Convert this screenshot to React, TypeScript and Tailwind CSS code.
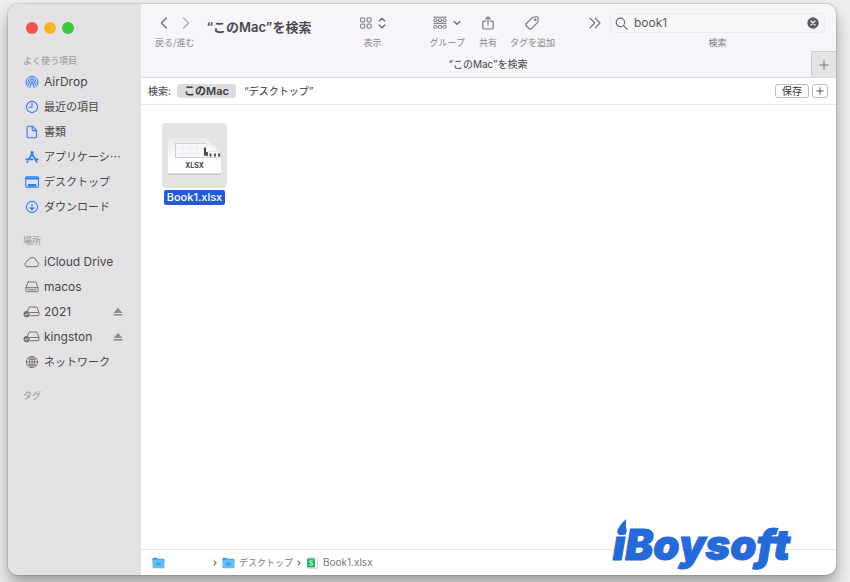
import { useState, type ReactNode } from "react";

const latin = "font-['Inter','Noto_Sans_CJK_JP',sans-serif]";
const jp = "font-['Noto_Sans_CJK_JP',sans-serif]";

const iconProps = {
  width: 18,
  height: 16,
  viewBox: "0 0 18 16",
  fill: "none",
  stroke: "currentColor",
  strokeLinecap: "round",
  strokeLinejoin: "round",
  "aria-hidden": true,
  className: "shrink-0",
} as const;

const strokeProps = {
  fill: "none",
  stroke: "currentColor",
  strokeLinecap: "round",
  strokeLinejoin: "round",
  "aria-hidden": true,
} as const;

function AirDropIcon() {
  return (
    <svg {...iconProps} strokeWidth="1">
      <path d="M5 12.8A6 6 0 1 1 13 12.8" />
      <path d="M5.9 11.2A4.2 4.2 0 1 1 12.1 11.2" />
      <path d="M7 9.8A2.5 2.5 0 1 1 11 9.8" />
      <path d="M8.4 9.4 6.8 13.6M9.6 9.4l1.6 4.2" />
      <circle cx="9" cy="8.3" r="1" fill="currentColor" stroke="none" />
    </svg>
  );
}

function ClockIcon() {
  return (
    <svg {...iconProps} strokeWidth="1.1">
      <circle cx="9" cy="8" r="5.6" />
      <path d="M9 4.6V8.2H6" />
    </svg>
  );
}

function DocumentIcon() {
  return (
    <svg {...iconProps} strokeWidth="1.1">
      <path d="M5.2 2.2h4.2l4.1 4.1v6.4a1.1 1.1 0 0 1-1.1 1.1H5.2a1.1 1.1 0 0 1-1.1-1.1V3.3a1.1 1.1 0 0 1 1.1-1.1Z" />
      <path d="M9.2 2.4v3.2a1 1 0 0 0 1 1h3.1" />
    </svg>
  );
}

function AppsIcon() {
  return (
    <svg {...iconProps} strokeWidth="1.7">
      <path d="M10 3 5.8 10.3M8.2 3l5.6 10M4.6 12.4l-.4.7" />
      <path d="M3.2 10.4h6.2M12.8 10.4h1.9" />
    </svg>
  );
}

function DesktopIcon() {
  return (
    <svg {...iconProps} strokeWidth="1.1">
      <rect x="2.7" y="2.9" width="12.8" height="10.2" rx="1" />
      <path d="M2.8 4.5h12.6" strokeWidth="2.2" strokeLinecap="butt" />
      <path d="M5 11.2h8.2" strokeWidth="2.4" strokeLinecap="butt" />
    </svg>
  );
}

function DownloadIcon() {
  return (
    <svg {...iconProps} strokeWidth="1.1">
      <circle cx="9" cy="8" r="5.6" />
      <path d="M9 5v5.6M6.9 8.7 9 10.8l2.1-2.1" />
    </svg>
  );
}

function CloudIcon() {
  return (
    <svg {...iconProps} strokeWidth="1">
      <path d="M4 12.7h9a2.8 2.8 0 0 0 .5-5.5A4.2 4.2 0 0 0 5.5 6a2.2 2.2 0 0 0-2 2.1A2.4 2.4 0 0 0 4 12.7Z" />
    </svg>
  );
}

function DiskIcon() {
  return (
    <svg {...iconProps} strokeWidth="1">
      <path d="M5.6 3h6.8a1 1 0 0 1 .9.7l1.7 5v3a1 1 0 0 1-1 1H4a1 1 0 0 1-1-1v-3l1.7-5a1 1 0 0 1 .9-.7Z" />
      <path d="M3.2 8.7h11.6M5.2 10.8h7.6" />
    </svg>
  );
}

function ExternalDiskIcon() {
  return (
    <svg {...iconProps} strokeWidth="1">
      <path d="M4.6 6.8 5.7 3.7A1 1 0 0 1 6.6 3h6.6a1 1 0 0 1 .9.7l1.9 4.9v2.1a1 1 0 0 1-1 1H7.4M7 8.5h8.6" />
      <circle cx="3.6" cy="10.2" r="3.1" fill="currentColor" stroke="none" />
      <path d="m2.3 10.3 1 1 1.6-2" stroke="#e4e1e5" strokeWidth="0.9" />
    </svg>
  );
}

function GlobeIcon() {
  return (
    <svg {...iconProps} strokeWidth="0.9">
      <circle cx="9" cy="8" r="5.6" />
      <ellipse cx="9" cy="8" rx="2.6" ry="5.6" />
      <path d="M3.5 8h11M9 2.5v11M4.8 4.6c2.5 1.3 5.9 1.3 8.4 0M4.8 11.4c2.5-1.3 5.9-1.3 8.4 0" />
    </svg>
  );
}

function FolderIcon() {
  return (
    <svg width="13" height="12" viewBox="0 0 13 12" aria-hidden="true" className="shrink-0">
      <path d="M.5 1.6a.8.8 0 0 1 .8-.8h3.2l1 1h6a1 1 0 0 1 1 1V5H.5Z" fill="#2f9bd0" />
      <rect x=".5" y="2.6" width="12" height="8.6" rx=".8" fill="#62bff3" />
      <rect x="4.5" y="5.4" width="4" height="3" rx=".6" fill="#46a5e0" />
    </svg>
  );
}

type Place = { name: string; icon: ReactNode; ascii?: boolean; eject?: boolean };

const favorites: Place[] = [
  { name: "AirDrop", icon: <AirDropIcon />, ascii: true },
  { name: "最近の項目", icon: <ClockIcon /> },
  { name: "書類", icon: <DocumentIcon /> },
  { name: "アプリケーシ…", icon: <AppsIcon /> },
  { name: "デスクトップ", icon: <DesktopIcon /> },
  { name: "ダウンロード", icon: <DownloadIcon /> },
];

const locations: Place[] = [
  { name: "iCloud Drive", icon: <CloudIcon />, ascii: true },
  { name: "macos", icon: <DiskIcon />, ascii: true },
  { name: "2021", icon: <ExternalDiskIcon />, ascii: true, eject: true },
  { name: "kingston", icon: <ExternalDiskIcon />, ascii: true, eject: true },
  { name: "ネットワーク", icon: <GlobeIcon /> },
];

function SidebarSection({ title, places = [], tint = "" }: { title: string; places?: Place[]; tint?: string }) {
  return (
    <section>
      <h2 className={`${jp} h-5 pt-1 text-[9px] leading-4 font-medium text-[#a3a0a5]`}>{title}</h2>
      <ul>
        {places.map((p) => (
          <li key={p.name} className="flex h-[25px] items-center pr-[18px]">
            <a href="#" className="flex flex-1 items-center gap-[3px] whitespace-nowrap text-[#48464a]">
              <span className={tint}>{p.icon}</span>
              <span className={p.ascii ? "text-[12px]" : `${jp} text-[11px]`}>{p.name}</span>
            </a>
            {p.eject && (
              <button aria-label={`${p.name} eject`} className="text-[#8f8c91]">
                <svg width="10" height="10" viewBox="0 0 10 10" fill="currentColor" aria-hidden="true">
                  <path d="M5 .8 9.4 6H.6Z" />
                  <rect x=".6" y="7" width="8.8" height="1.6" />
                </svg>
              </button>
            )}
          </li>
        ))}
      </ul>
    </section>
  );
}

function ToolItem({ label, children }: { label: string; children: ReactNode }) {
  return (
    <div className="flex shrink-0 flex-col items-center">
      <div className="flex h-5 items-center text-[#727075]">{children}</div>
      <span className={`${jp} mt-1 text-[9px] leading-3 whitespace-nowrap text-[#8b888d]`}>{label}</span>
    </div>
  );
}

function Toolbar() {
  const [query, setQuery] = useState("book1");

  return (
    <div className="flex items-start pt-[9px] pr-[11px] pl-[14px]">
      <ToolItem label="戻る/進む">
        <div className="flex items-center gap-3">
          <button aria-label="戻る">
            <svg width="10" height="12" viewBox="0 0 10 12" strokeWidth="1.4" {...strokeProps}>
              <path d="M7.4 1 2.4 6l5 5" />
            </svg>
          </button>
          <button aria-label="進む" className="text-[#b3b0b5]">
            <svg width="10" height="12" viewBox="0 0 10 12" strokeWidth="1.4" {...strokeProps}>
              <path d="m2.6 1 5 5-5 5" />
            </svg>
          </button>
        </div>
      </ToolItem>
      <h1 className="ml-3 flex-1 pt-1 text-[13px] leading-5 font-semibold whitespace-nowrap text-[#4a484c]">
        “このMac”を検索
      </h1>

      <ToolItem label="表示">
        <button aria-label="表示" className="flex items-center gap-1.5">
          <svg width="12" height="12" viewBox="0 0 12 12" fill="none" stroke="currentColor" strokeWidth="1" aria-hidden="true">
            <rect x=".7" y=".9" width="4" height="4" rx=".6" />
            <rect x="7.1" y=".9" width="4" height="4" rx=".6" />
            <rect x=".7" y="7.1" width="4" height="4" rx=".6" />
            <rect x="7.1" y="7.1" width="4" height="4" rx=".6" />
          </svg>
          <svg width="8" height="12" viewBox="0 0 8 12" strokeWidth="1.4" {...strokeProps}>
            <path d="m1.2 4 2.8-2.8L6.8 4M1.2 8 4 10.8 6.8 8" />
          </svg>
        </button>
      </ToolItem>
      <div className="w-11 shrink-0" />
      <ToolItem label="グループ">
        <button aria-label="グループ" className="flex items-center gap-1.5">
          <svg width="14" height="14" viewBox="0 0 14 14" fill="none" stroke="currentColor" strokeWidth=".9" aria-hidden="true">
            <path d="M.5 1.2h13M.5 7.3h13" strokeWidth="1" />
            {[0.9, 5.5, 10.1].map((x) => (
              <g key={x}>
                <rect x={x} y="3" width="3" height="2.5" rx=".5" />
                <rect x={x} y="9.4" width="3" height="2.8" rx=".5" />
              </g>
            ))}
          </svg>
          <svg width="8" height="6" viewBox="0 0 8 6" strokeWidth="1.4" {...strokeProps}>
            <path d="M1.2 1.6 4 4.2l2.8-2.6" />
          </svg>
        </button>
      </ToolItem>
      <div className="w-[14px] shrink-0" />
      <ToolItem label="共有">
        <button aria-label="共有">
          <svg width="12" height="14" viewBox="0 0 12 14" strokeWidth="1.1" {...strokeProps}>
            <path d="M4 5H1.8a.9.9 0 0 0-.9.9v6.2a.9.9 0 0 0 .9.9h8.4a.9.9 0 0 0 .9-.9V5.9a.9.9 0 0 0-.9-.9H8M6 8.8V1M3.8 3 6 .9 8.2 3" />
          </svg>
        </button>
      </ToolItem>
      <div className="w-[13px] shrink-0" />
      <ToolItem label="タグを追加">
        <button aria-label="タグを追加">
          <svg width="14" height="14" viewBox="0 0 14 14" strokeWidth="1.1" {...strokeProps}>
            <path d="M8.3 1.2 11.5.8a1.5 1.5 0 0 1 1.7 1.7l-.4 3.2a2 2 0 0 1-.6 1.2L6.5 12.6a1.8 1.8 0 0 1-2.5 0L1.4 10a1.8 1.8 0 0 1 0-2.5l5.7-5.7a2 2 0 0 1 1.2-.6Z" />
            <circle cx="10.3" cy="3.7" r=".7" />
          </svg>
        </button>
      </ToolItem>
      <button aria-label="その他" className="ml-[34px] flex h-5 shrink-0 items-center text-[#727075]">
        <svg width="12" height="12" viewBox="0 0 12 12" strokeWidth="1.2" {...strokeProps}>
          <path d="M1 1.2 5.6 6 1 10.8M6.3 1.2 10.9 6l-4.6 4.8" />
        </svg>
      </button>
      <div className="ml-[9px] flex w-[215px] shrink-0 flex-col items-center">
        <div className="flex h-5 w-full items-center rounded-[4px] border border-[#eeebef] bg-[#f8f6f9] pr-[5px] pl-1 text-[#6d6b70]">
          <svg width="13" height="13" viewBox="0 0 13 13" strokeWidth="1.2" {...strokeProps}>
            <circle cx="5.4" cy="5.4" r="4.2" />
            <path d="m8.6 8.6 3.4 3.4" />
          </svg>
          <input
            id="search"
            type="text"
            value={query}
            onChange={(e) => setQuery(e.target.value)}
            className="ml-1.5 min-w-0 flex-1 bg-transparent text-[12px] text-[#5b595d] outline-none"
          />
          <button aria-label="消去" onClick={() => setQuery("")}>
            <svg width="12" height="12" viewBox="0 0 12 12" aria-hidden="true">
              <circle cx="6" cy="6" r="5.7" fill="#5d5b60" />
              <path d="m4 4 4 4M8 4 4 8" stroke="#f8f6f9" strokeWidth="1.2" strokeLinecap="round" />
            </svg>
          </button>
        </div>
        <label htmlFor="search" className={`${jp} mt-1 text-[9px] leading-3 text-[#7b797d]`}>
          検索
        </label>
      </div>
    </div>
  );
}

function PlusIcon({ size }: { size: number }) {
  return (
    <svg width={size} height={size} viewBox="0 0 10 10" fill="none" stroke="currentColor" strokeWidth="1" aria-hidden="true">
      <path d="M5 .5v9M.5 5h9" />
    </svg>
  );
}

function XlsxFileIcon() {
  return (
    <svg width="65" height="65" viewBox="0 0 65 65" aria-hidden="true">
      <defs>
        <linearGradient id="paper" x1="0" y1="0" x2="0" y2="1">
          <stop offset="0" stopColor="#e9e9e9" />
          <stop offset="0.6" stopColor="#fdfdfd" />
        </linearGradient>
        <linearGradient id="curl" x1="0" y1="1" x2="1" y2="0">
          <stop offset="0" stopColor="#ffffff" />
          <stop offset="1" stopColor="#dcdcdc" />
        </linearGradient>
      </defs>
      <path d="M6 16h38l15 13v23H6Z" fill="#c6c6c6" />
      <path d="M6 15h38l15 14v21.5H6Z" fill="url(#paper)" />
      <rect x="13.5" y="20.5" width="45" height="14" fill="#f6f7f8" stroke="#c3c7cd" strokeWidth=".8" />
      <path d="M14 25.5h28M14 30h28M21 21v13M28 21v13M35 21v13" stroke="#e4e7ec" strokeWidth=".6" />
      <path d="M43 24.5v8" stroke="#444" strokeWidth="2" />
      <path d="M44 14v14.5l16 1V14Z" fill="#e3e3e3" />
      <path d="M44 15c1 5 .5 9 .3 13.5 5-.8 10-.3 14.7.9Z" fill="url(#curl)" />
      <path d="M45 29v4M48.5 30.5v3M53 30.5v3M57 30.5v3" stroke="#444" strokeWidth="1.8" />
      <text x="32.5" y="45" textAnchor="middle" fontSize="7" fontWeight="600" fill="#333" fontFamily="Inter, sans-serif">
        XLSX
      </text>
    </svg>
  );
}

function PathChevron() {
  return (
    <svg width="4" height="6" viewBox="0 0 4 6" fill="none" stroke="#6c6a6e" strokeWidth="1.1" aria-hidden="true">
      <path d="m.8.7 2.3 2.3L.8 5.3" />
    </svg>
  );
}

function PathBar() {
  return (
    <nav className="flex h-[26px] items-center border-t border-[#e6e6e6] pl-[11px] text-[10px] text-[#7b797d]">
      <a href="#" aria-label="ホーム">
        <FolderIcon />
      </a>
      <span className="ml-12">
        <PathChevron />
      </span>
      <a href="#" className="ml-[5px] flex items-center gap-1">
        <FolderIcon />
        <span className={`${jp} text-[9px]`}>デスクトップ</span>
      </a>
      <span className="ml-1">
        <PathChevron />
      </span>
      <a href="#" className="ml-[6px] flex items-center gap-[5px]">
        <svg width="11" height="12" viewBox="0 0 11 12" aria-hidden="true">
          <path d="M1 .5h7l2.5 2.5v8.5H1Z" fill="#fff" stroke="#c9c9c9" strokeWidth=".7" />
          <rect x="0" y="1.5" width="8" height="9" rx="1" fill="#1fb866" />
          <path d="M5.7 4.2c-.9-.9-3.2-.6-3.2.6 0 1.5 3.2.8 3.2 2.3 0 1.3-2.4 1.5-3.3.5" fill="none" stroke="#fff" strokeWidth=".9" />
        </svg>
        <span>Book1.xlsx</span>
      </a>
    </nav>
  );
}

function Watermark() {
  return (
    <div className="pointer-events-none absolute right-[46px] bottom-0.5 text-[#2669d9]">
      {/* flame over the i */}
      <svg width="12" height="18" viewBox="0 0 12 18" className="absolute top-0.5 left-1" fill="currentColor" aria-hidden="true">
        <path d="M9.5 0C5.5 3 2 6.500 1.600 11L1.200 15.500H9C10 11.500 8 6.500 9.500 0Z" />
      </svg>
      <span className="block font-['Inter',sans-serif] text-[42px] leading-[56px] font-black italic [-webkit-text-stroke:1px_#2669d9]">
        iBoysoft
      </span>
    </div>
  );
}

export default function App() {
  return (
    <div className={`${latin} flex min-h-screen bg-[#efefef] pt-1 pr-[14px] pb-[7px] pl-2`}>
      <div className="relative flex flex-1 overflow-hidden rounded-[10px] bg-white shadow-[0_0_1px_1px_rgba(0,0,0,0.12),0_9px_16px_rgba(0,0,0,0.35)]">
        {/* Sidebar */}
        <aside className="flex w-[133px] shrink-0 flex-col gap-[10px] bg-[#e4e1e5] pt-[18px] pl-[15px]">
          <div className="mb-[5px] flex gap-1.5 pl-[3px]">
            <button aria-label="閉じる" className="size-3 rounded-full bg-[#f4544f]" />
            <button aria-label="しまう" className="size-3 rounded-full bg-[#fab427]" />
            <button aria-label="拡大" className="size-3 rounded-full bg-[#3ac63d]" />
          </div>
          <SidebarSection title="よく使う項目" places={favorites} tint="text-[#2f7cf6]" />
          <SidebarSection title="場所" places={locations} tint="text-[#757277]" />
          <SidebarSection title="タグ" />
        </aside>

        <div className="flex min-w-0 flex-1 flex-col">
          <header className="flex h-[74px] flex-col justify-between border-b border-[#e0dde1] bg-[#f7f5f9]">
            <Toolbar />
            <div className="flex h-[26px] items-stretch">
              <div className="flex flex-1 items-center justify-center pl-6 text-[10px] text-[#454347]">“このMac”を検索</div>
              <button aria-label="新規タブ" className="flex w-[25px] items-center justify-center border-t border-l border-[#cfccd0] bg-[#e6e3e7] text-[#78767a]">
                <PlusIcon size={10} />
              </button>
            </div>
          </header>

          {/* Search scope */}
          <div className="flex h-[27px] items-center border-b border-[#e9e9e9] pr-2 pl-[7px] text-[10px] text-[#5a585c]">
            <span className="font-medium">検索:</span>
            <button className="ml-[6px] flex h-[14px] items-center rounded-[3px] bg-[#dcdcdc] px-[7px] text-[11px] font-semibold text-[#3f3d41]">
              このMac
            </button>
            <button className="ml-2 font-medium">“デスクトップ”</button>
            <div className="ml-auto flex gap-[3px] text-[#2f2d31]">
              <button className="flex h-[14px] w-[34px] items-center justify-center rounded-[3px] border border-[#bdbdbd]">保存</button>
              <button aria-label="条件を追加" className="flex h-[14px] w-4 items-center justify-center rounded-[3px] border border-[#bdbdbd]">
                <PlusIcon size={8} />
              </button>
            </div>
          </div>

          <main className="flex-1 pt-[18px] pl-[21px]">
            <button className="flex flex-col items-center gap-[2px]">
              <span className="rounded-[4px] bg-[#e3e3e3]">
                <XlsxFileIcon />
              </span>
              <span className="rounded-[2px] bg-[#1f5bdb] px-[3px] text-[11px] leading-[15px] font-medium text-white">Book1.xlsx</span>
            </button>
          </main>

          <PathBar />
        </div>

        <Watermark />
      </div>
    </div>
  );
}
